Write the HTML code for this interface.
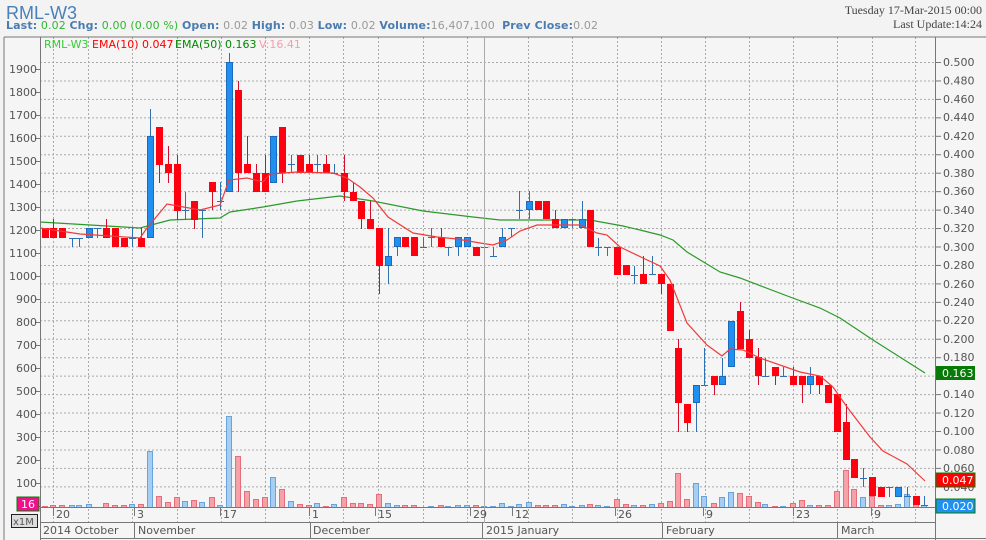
<!DOCTYPE html>
<html><head><meta charset="utf-8"><style>
html,body{margin:0;padding:0;background:#f3f3f3;width:986px;height:540px;overflow:hidden}
body{position:relative;font-family:"DejaVu Sans","Liberation Sans",sans-serif}
.t{position:absolute;white-space:nowrap}
svg{position:absolute;left:0;top:0}
</style></head><body>
<div class="t" style="left:6px;top:3px;font-size:18px;color:#4a80b8;font-family:'Liberation Sans',sans-serif">RML-W3</div>
<div class="t" style="left:6px;top:19px;font-size:11px;color:#999;letter-spacing:0.12px"><b style="color:#4a7cb0">Last:</b><span style="color:#2eb82e"> 0.02 </span><b style="color:#4a7cb0">Chg:</b><span style="color:#2eb82e"> 0.00 (0.00 %) </span> <b style="color:#4a7cb0">Open:</b> 0.02 <b style="color:#4a7cb0">High:</b> 0.03 <b style="color:#4a7cb0">Low:</b> 0.02 <b style="color:#4a7cb0">Volume:</b>16,407,100 &nbsp;<b style="color:#4a7cb0">Prev Close:</b>0.02</div>
<div class="t" style="right:4px;top:3px;font-size:12px;color:#444;font-family:'Liberation Serif',serif">Tuesday 17-Mar-2015 00:00</div>
<div class="t" style="right:4px;top:17px;font-size:12px;color:#444;font-family:'Liberation Serif',serif">Last Update:14:24</div>
<svg id="c" width="986" height="540" xmlns="http://www.w3.org/2000/svg">
<rect x="4" y="37" width="982" height="503" fill="#f5f5f5"/>
<g id="grid"></g>
<g id="vol"></g>
<polyline fill="none" stroke="#2a9a2a" stroke-width="1.2" points="40,222 140,228 170,220 220,218 230,212 263,207 297,201 340,196 373,201 423,211 473,217 500,220 540,220 590,220 623,226 640,230 660,235 673,240 687,252 720,272 740,278 790,297 820,308 840,318 873,340 925,373"/>
<g id="cand"></g>
<polyline fill="none" stroke="#f03a3a" stroke-width="1.2" points="40,228 80,234 140,238 147,228 167,204 200,210 220,205 229,180 247,178 263,182 270,174 297,172 333,173 347,178 360,187 373,198 388,217 413,233 437,237 457,239 480,243 493,245 507,240 520,231 537,225 557,225 580,225 597,233 607,235 620,247 643,258 660,266 670,280 687,323 707,345 722,356 730,349 743,350 760,358 800,372 820,376 833,387 847,407 870,437 883,451 907,464 925,481"/>
<g stroke="#777" stroke-width="1" fill="none">
<line x1="4" y1="37" x2="986" y2="37"/>
<line x1="4" y1="37" x2="4" y2="540"/>
<line x1="40.5" y1="37" x2="40.5" y2="540"/>
<line x1="935.5" y1="37" x2="935.5" y2="540"/>
<line x1="40" y1="507.5" x2="935" y2="507.5"/>
<line x1="40" y1="522.5" x2="935" y2="522.5"/>
<line x1="40" y1="538.5" x2="986" y2="538.5"/>
<line x1="484.5" y1="37" x2="484.5" y2="523" stroke="#aaa"/>
</g>
<g id="ax"></g>
<g font-size="11" fill="#555" text-anchor="end">
<text x="37" y="73">1900</text><text x="37" y="96">1800</text><text x="37" y="119">1700</text><text x="37" y="142">1600</text><text x="37" y="165">1500</text><text x="37" y="188">1400</text><text x="37" y="211">1300</text><text x="37" y="234">1200</text><text x="37" y="257">1100</text><text x="37" y="280">1000</text><text x="37" y="303">900</text><text x="37" y="326">800</text><text x="37" y="349">700</text><text x="37" y="372">600</text><text x="37" y="395">500</text><text x="37" y="418">400</text><text x="37" y="441">300</text><text x="37" y="464">200</text><text x="37" y="487">100</text>
</g>
<g font-size="11" fill="#555">
<text x="943" y="66">0.500</text><text x="943" y="84.5">0.480</text><text x="943" y="103">0.460</text><text x="943" y="121">0.440</text><text x="943" y="140">0.420</text><text x="943" y="158">0.400</text><text x="943" y="177">0.380</text><text x="943" y="195">0.360</text><text x="943" y="214">0.340</text><text x="943" y="232">0.320</text><text x="943" y="251">0.300</text><text x="943" y="269">0.280</text><text x="943" y="288">0.260</text><text x="943" y="306">0.240</text><text x="943" y="324">0.220</text><text x="943" y="343">0.200</text><text x="943" y="361">0.180</text><text x="943" y="398">0.140</text><text x="943" y="417">0.120</text><text x="943" y="435">0.100</text><text x="943" y="454">0.080</text><text x="943" y="472">0.060</text><text x="943" y="491">0.040</text>
</g>
<rect x="936" y="366" width="39" height="14" fill="#087a08"/><text x="942" y="377" font-size="11" fill="#fff">0.163</text>
<rect x="936" y="473" width="39" height="14" fill="#f00" stroke="#087a08"/><text x="942" y="484" font-size="11" fill="#fff">0.047</text>
<rect x="936" y="499" width="39" height="14" fill="#2090f0" stroke="#087a08"/><text x="942" y="510" font-size="11" fill="#fff">0.020</text>
<rect x="17" y="497" width="22" height="14" fill="#f0108a" stroke="#087a08"/><text x="21" y="508" font-size="11" fill="#fff">16</text>
<rect x="11.5" y="514.5" width="26" height="13" fill="#ddd" stroke="#222"/><text x="13" y="525" font-size="10" fill="#555">x1M</text>
<g font-size="11" fill="#555">
<text x="56" y="518">20</text><text x="137" y="518">3</text><text x="223" y="518">17</text><text x="312" y="518">1</text><text x="378" y="518">15</text><text x="473" y="518">29</text><text x="515" y="518">12</text><text x="618" y="518">26</text><text x="706" y="518">9</text><text x="796" y="518">23</text><text x="874" y="518">9</text>
<text x="43" y="534">2014 October</text><text x="138" y="534">November</text><text x="313" y="534">December</text><text x="486" y="534">2015 January</text><text x="666" y="534">February</text><text x="841" y="534">March</text>
</g>
<g font-size="11">
<text x="44" y="48" fill="#3c3">RML-W3</text><text x="92" y="48" fill="#f00">EMA(10) 0.047</text><text x="175" y="48" fill="#080">EMA(50) 0.163</text><text x="259" y="48" fill="#f9a">V:16.41</text>
</g>
</svg>
<script>
var NS="http://www.w3.org/2000/svg";
function el(p,n,a){var e=document.createElementNS(NS,n);for(var k in a)e.setAttribute(k,a[k]);document.getElementById(p).appendChild(e);return e;}
for(var k=0;k<24;k++){var y=62.5+18.45*k;el("grid","line",{x1:40,x2:935,y1:y,y2:y,stroke:"#aaa","stroke-dasharray":"2,2"});}
[53,88,132,177,221,265,309,343,378,423,467,528,572,617,661,705,749,793,837,872,915].forEach(function(x){el("grid","line",{x1:x+.5,x2:x+.5,y1:37,y2:523,stroke:"#aaa","stroke-dasharray":"2,2"});});
[53,134,220,309,375,470,512,615,703,793,871].forEach(function(x){el("ax","line",{x1:x+.5,x2:x+.5,y1:508,y2:516,stroke:"#777"});});
[137,313,485,665,840].forEach(function(x){el("ax","line",{x1:x-2.5,x2:x-2.5,y1:523,y2:538,stroke:"#777"});});
for(var v=0;v<20;v++){var y=506.5-23*v;el("ax","line",{x1:35,x2:40,y1:y,y2:y,stroke:"#777"});}
for(var k=0;k<24;k++){var y=62.5+18.45*k;el("ax","line",{x1:935,x2:941,y1:y,y2:y,stroke:"#777"});}
var C=[[42,228,238,228,238,'r'],[50,228,238,219,238,'r'],[59,228,238,228,238,'r'],[69,238,238,238,247,'x'],[76,238,238,238,247,'x'],[86,228,238,228,238,'b'],[94,228,228,228,238,'x'],[103,228,238,219,238,'r'],[112,228,247,228,247,'r'],[121,238,247,238,247,'r'],[129,238,238,228,247,'x'],[138,238,247,228,247,'r'],[147,136,238,109,238,'b'],[156,127,165,127,183,'r'],[165,164,173,146,183,'r'],[174,164,211,155,220,'r'],[182,210,210,192,220,'x'],[191,201,220,201,229,'r'],[199,210,210,210,238,'x'],[209,182,192,182,210,'r'],[217,201,201,182,210,'x'],[226,62,192,53,192,'b'],[235,90,173,81,192,'r'],[244,164,173,136,173,'r'],[253,173,192,164,192,'r'],[262,173,192,155,192,'r'],[270,136,183,136,183,'b'],[279,127,173,127,183,'r'],[288,164,164,155,173,'x'],[297,155,173,155,173,'r'],[306,164,173,155,173,'r'],[314,164,164,155,173,'x'],[323,164,173,155,173,'r'],[331,173,173,164,173,'x'],[341,173,192,155,201,'r'],[350,192,201,183,201,'r'],[358,201,219,201,229,'r'],[367,219,229,201,229,'r'],[376,228,266,228,294,'r'],[385,256,266,228,284,'b'],[394,237,247,237,256,'b'],[402,237,247,237,247,'r'],[411,237,256,237,256,'r'],[420,247,247,237,247,'x'],[428,237,237,228,247,'x'],[438,237,247,228,247,'r'],[445,247,247,247,256,'x'],[455,237,247,237,256,'b'],[464,237,247,237,247,'b'],[473,247,256,247,256,'r'],[481,247,247,247,256,'x'],[490,256,256,247,256,'x'],[499,237,247,228,247,'b'],[508,228,228,228,237,'x'],[516,210,210,191,219,'x'],[526,201,210,191,219,'b'],[535,201,210,201,210,'r'],[543,201,219,201,219,'r'],[552,219,228,210,228,'r'],[561,219,228,219,228,'b'],[569,219,219,219,228,'x'],[579,219,228,201,228,'b'],[587,210,247,210,247,'r'],[595,247,247,238,256,'x'],[604,247,247,247,256,'x'],[614,247,275,247,275,'r'],[623,265,275,265,275,'r'],[631,275,275,266,284,'x'],[640,274,284,256,284,'r'],[649,274,274,256,275,'x'],[658,274,284,274,294,'r'],[667,284,331,284,331,'r'],[675,348,403,339,432,'r'],[684,404,423,404,432,'r'],[693,385,403,385,432,'b'],[701,385,385,348,385,'x'],[711,376,385,376,395,'r'],[719,376,385,358,385,'b'],[728,321,367,321,367,'b'],[737,311,349,302,349,'r'],[746,339,358,330,358,'r'],[755,357,376,348,385,'r'],[762,376,376,358,376,'x'],[772,367,376,367,385,'r'],[780,376,376,367,376,'x'],[790,376,385,367,385,'r'],[799,376,385,376,403,'r'],[807,376,385,367,394,'b'],[816,376,385,376,394,'r'],[825,385,403,385,403,'r'],[834,394,432,394,432,'r'],[843,422,460,404,460,'r'],[851,459,478,459,478,'r'],[860,478,478,468,487,'x'],[869,477,496,477,496,'r'],[878,487,497,487,497,'r'],[886,487,487,487,497,'x'],[895,487,497,487,497,'b'],[904,496,496,487,496,'x'],[913,496,505,496,505,'r'],[921,505,505,496,505,'x']];
var V=[1,2,2,2,2,3,0,4,2,2,3,3,56,11,5,10,6,7,5,10,2,91,51,16,8,10,30,18,6,3,2,4,1,3,10,4,4,3,13,4,2,2,2,0,1,2,1,2,2,2,1,1,4,1,3,5,2,2,2,3,1,2,3,2,1,8,3,2,2,3,4,6,34,8,24,11,4,10,15,14,11,5,3,1,1,4,7,2,2,2,16,37,18,10,11,2,2,3,13,4,2];
C.forEach(function(c,i){
 var L=c[0],t=c[5],h=V[i]||0,blue=(t!='r');
 if(h>0)el("vol","rect",{x:L+.5,y:507-h+.5,width:5,height:h,fill:blue?"#a6cef2":"#f6a0a8",stroke:blue?"#6aa2dc":"#e46e7c","stroke-width":1});
 var wc=L+3.5, col=t=='r'?"#d0102a":"#3070b0";
 if(t=='x'){el("cand","line",{x1:wc,x2:wc,y1:c[3],y2:c[4],stroke:col});el("cand","line",{x1:L,x2:L+7,y1:c[1]+.5,y2:c[1]+.5,stroke:col});return;}
 el("cand","line",{x1:wc,x2:wc,y1:c[3],y2:c[4],stroke:col});
 el("cand","rect",{x:L+.5,y:c[1]+.5,width:6,height:Math.max(1,c[2]-c[1]-1),fill:t=='r'?"#ff0010":"#2090f0",stroke:t=='r'?"#ff0010":"#1a6ac0"});
});
</script>
</body></html>
